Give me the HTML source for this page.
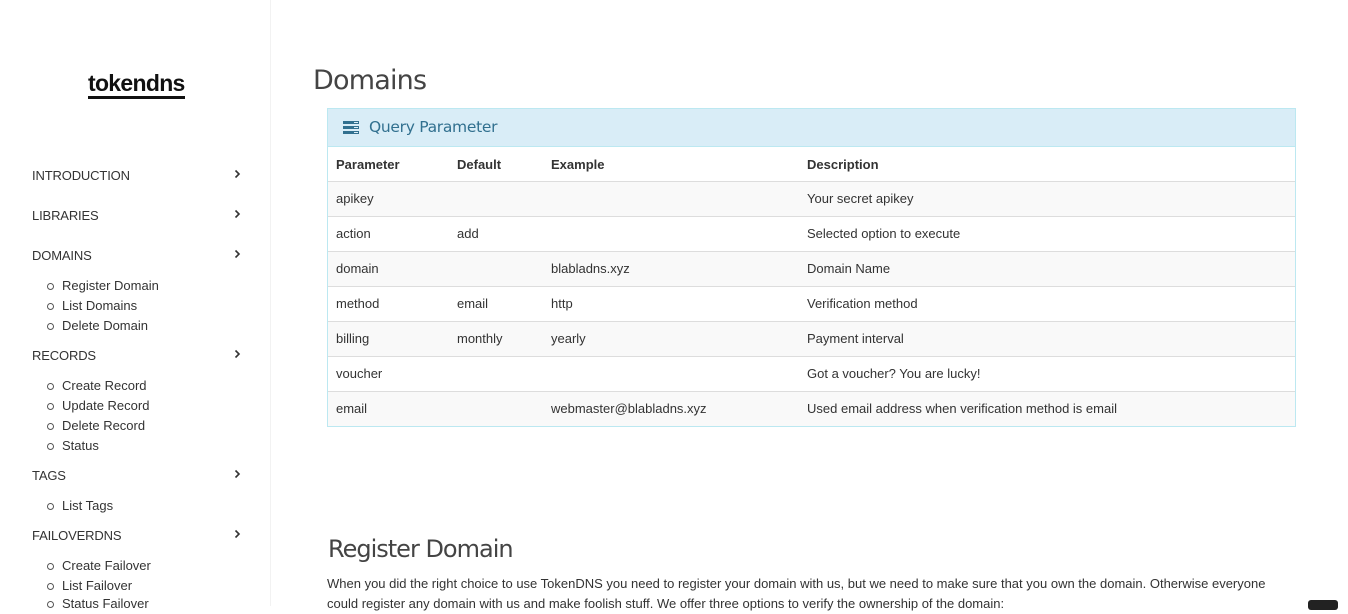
<!DOCTYPE html>
<html><head><meta charset="utf-8"><style>
*{box-sizing:border-box;margin:0;padding:0}
body{width:1348px;height:606px;overflow:hidden;background:#fff;font-family:"Liberation Sans",Arial,sans-serif;color:#333;position:relative}
.side{position:absolute;left:0;top:0;width:271px;height:606px;border-right:1px solid #f2f2f2}
.logo{position:absolute;left:88px;top:71px;font-size:23px;font-weight:bold;color:#111;letter-spacing:-0.7px;border-bottom:3px solid #111;line-height:24px;padding-bottom:1px}
.nav{position:absolute;left:32px;font-size:13px;color:#333}
.nav .h{position:absolute;left:0;width:210px;white-space:nowrap;letter-spacing:-0.15px}
.nav .h svg{position:absolute;left:202px;top:1px}
.sub{position:absolute;left:62px;font-size:13px;color:#333;white-space:nowrap}
.sub:before{content:"";position:absolute;left:-15px;top:5px;width:5px;height:5px;border:1px solid #555;border-radius:50%}
h1{position:absolute;left:313px;top:65px;font-size:27px;font-weight:normal;color:#444;font-family:"DejaVu Sans","Liberation Sans",sans-serif;letter-spacing:-0.8px}
.panel{position:absolute;left:327px;top:108px;width:969px;height:319px;border:1px solid #bce8f1}
.ph{height:38px;background:#d9edf7;border-bottom:1px solid #bce8f1;color:#31708f;font-size:15.5px;font-family:"DejaVu Sans","Liberation Sans",sans-serif;padding:9px 0 0 41px;position:relative;letter-spacing:-0.3px}
.ph svg{position:absolute;left:15px;top:12px}
table{border-collapse:collapse;width:100%;font-size:13px}
td,th{height:35px;padding:0 8px;text-align:left;border-top:1px solid #ddd}
th{font-weight:bold;border-top:none;border-bottom:1px solid #ddd;height:34px;padding-top:2px}
tr.o td{background:#f9f9f9}
h2{position:absolute;left:328px;top:535px;font-size:24px;font-weight:normal;color:#444;font-family:"DejaVu Sans","Liberation Sans",sans-serif;letter-spacing:-1px}
p{position:absolute;left:327px;top:574px;width:960px;font-size:13px;line-height:20px;color:#333}
.btn{position:absolute;left:1308px;top:600px;width:30px;height:10px;background:#222;border-radius:3px}
</style></head><body>
<div class="side">
<div class="logo">tokendns</div>
<div class="nav">
<div class="h" style="top:168px">INTRODUCTION<svg width="7" height="10" viewBox="0 0 7 10"><path d="M1.5 1.5L5 5L1.5 8.5" stroke="#333" stroke-width="1.6" fill="none"/></svg></div>
<div class="h" style="top:208px">LIBRARIES<svg width="7" height="10" viewBox="0 0 7 10"><path d="M1.5 1.5L5 5L1.5 8.5" stroke="#333" stroke-width="1.6" fill="none"/></svg></div>
<div class="h" style="top:248px">DOMAINS<svg width="7" height="10" viewBox="0 0 7 10"><path d="M1.5 1.5L5 5L1.5 8.5" stroke="#333" stroke-width="1.6" fill="none"/></svg></div>
<div class="h" style="top:348px">RECORDS<svg width="7" height="10" viewBox="0 0 7 10"><path d="M1.5 1.5L5 5L1.5 8.5" stroke="#333" stroke-width="1.6" fill="none"/></svg></div>
<div class="h" style="top:468px">TAGS<svg width="7" height="10" viewBox="0 0 7 10"><path d="M1.5 1.5L5 5L1.5 8.5" stroke="#333" stroke-width="1.6" fill="none"/></svg></div>
<div class="h" style="top:528px">FAILOVERDNS<svg width="7" height="10" viewBox="0 0 7 10"><path d="M1.5 1.5L5 5L1.5 8.5" stroke="#333" stroke-width="1.6" fill="none"/></svg></div>
</div>
<div class="sub" style="top:278px">Register Domain</div>
<div class="sub" style="top:298px">List Domains</div>
<div class="sub" style="top:318px">Delete Domain</div>
<div class="sub" style="top:378px">Create Record</div>
<div class="sub" style="top:398px">Update Record</div>
<div class="sub" style="top:418px">Delete Record</div>
<div class="sub" style="top:438px">Status</div>
<div class="sub" style="top:498px">List Tags</div>
<div class="sub" style="top:558px">Create Failover</div>
<div class="sub" style="top:578px">List Failover</div>
<div class="sub" style="top:596px">Status Failover</div>
</div>
<h1>Domains</h1>
<div class="panel">
<div class="ph"><svg width="16" height="13" viewBox="0 0 16 13"><rect x="0" y="0" width="16" height="3" fill="#31708f"/><rect x="0" y="5" width="16" height="3" fill="#31708f"/><rect x="0" y="10" width="16" height="3" fill="#31708f"/><rect x="11" y="1" width="4" height="1" fill="#d9edf7"/><rect x="11" y="6" width="4" height="1" fill="#d9edf7"/><rect x="11" y="11" width="4" height="1" fill="#d9edf7"/></svg>Query Parameter</div>
<table>
<tr><th style="width:121px">Parameter</th><th style="width:94px">Default</th><th style="width:256px">Example</th><th>Description</th></tr>
<tr class="o"><td>apikey</td><td></td><td></td><td>Your secret apikey</td></tr>
<tr><td>action</td><td>add</td><td></td><td>Selected option to execute</td></tr>
<tr class="o"><td>domain</td><td></td><td>blabladns.xyz</td><td>Domain Name</td></tr>
<tr><td>method</td><td>email</td><td>http</td><td>Verification method</td></tr>
<tr class="o"><td>billing</td><td>monthly</td><td>yearly</td><td>Payment interval</td></tr>
<tr><td>voucher</td><td></td><td></td><td>Got a voucher? You are lucky!</td></tr>
<tr class="o"><td>email</td><td></td><td>webmaster@blabladns.xyz</td><td>Used email address when verification method is email</td></tr>
</table>
</div>
<h2>Register Domain</h2>
<p>When you did the right choice to use TokenDNS you need to register your domain with us, but we need to make sure that you own the domain. Otherwise everyone could register any domain with us and make foolish stuff. We offer three options to verify the ownership of the domain:</p>
<div class="btn"></div>
</body></html>
